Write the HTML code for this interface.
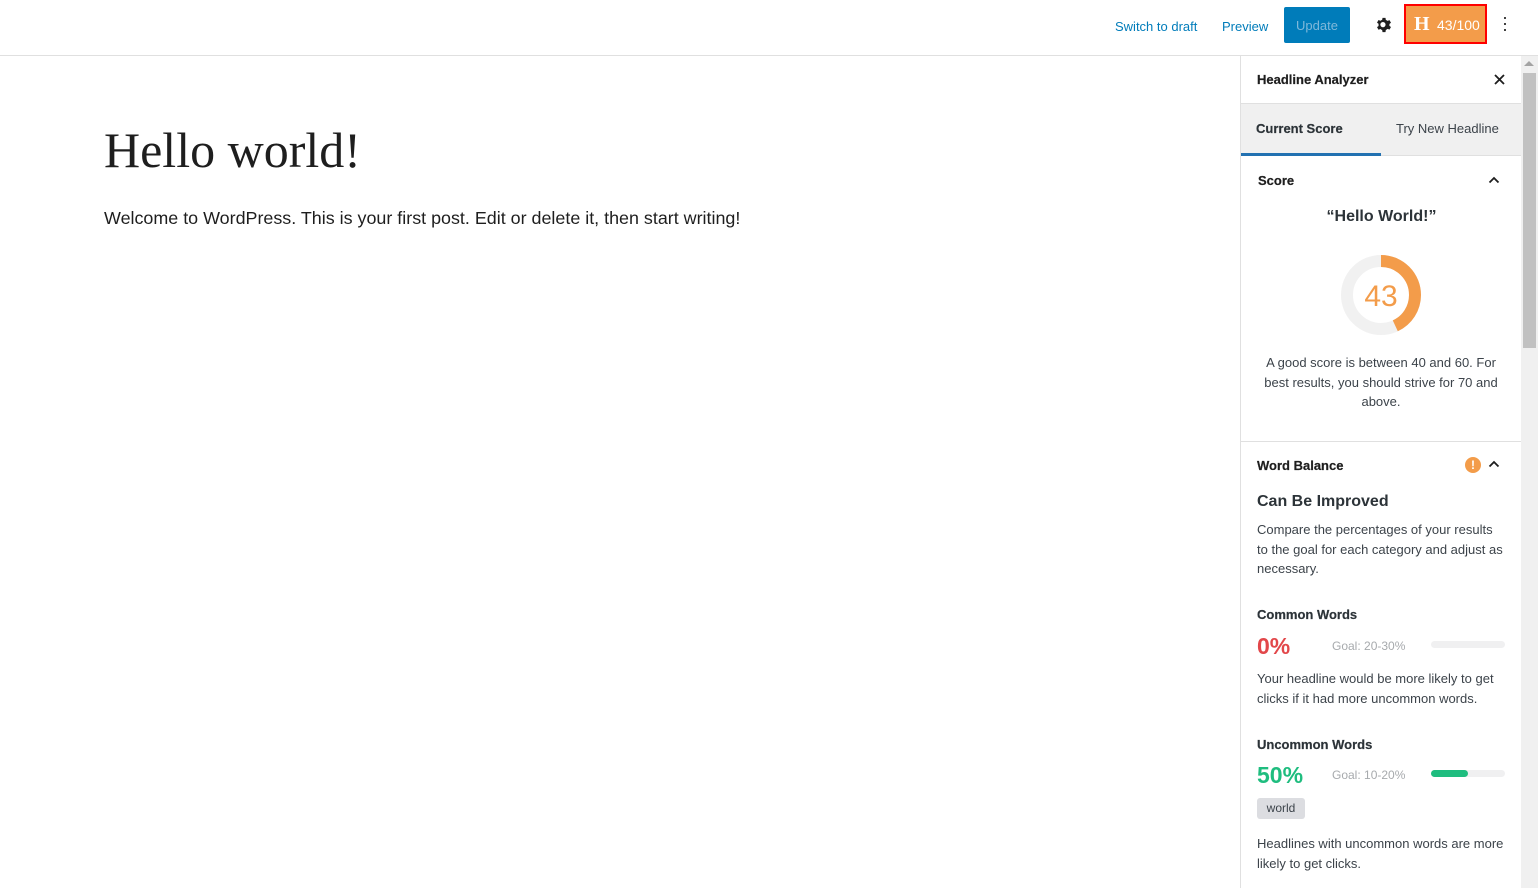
<!DOCTYPE html>
<html><head><meta charset="utf-8"><style>
*{box-sizing:border-box;margin:0;padding:0}
body{width:1538px;height:888px;overflow:hidden;background:#fff;font-family:"Liberation Sans",sans-serif;color:#1e1e1e;position:relative}
.top{position:absolute;left:0;top:0;width:1538px;height:56px;border-bottom:1px solid #e0e0e0}
.a{position:absolute;font-size:13px;color:#007cba;top:19px}
.upd{position:absolute;left:1284px;top:7px;width:66px;height:36px;background:#007cba;color:#7fb8da;font-size:13px;line-height:38px;text-align:center;border-radius:2px}
.hb{position:absolute;left:1404px;top:4px;width:83px;height:40px;border:2px solid #f00;background:#f39c4a;color:#fff}
.sb{position:absolute;left:1240px;top:56px;width:282px;height:832px;border-left:1px solid #e0e0e0}
.t{position:absolute;font-size:13px;font-weight:600;-webkit-text-stroke:0.2px currentColor}
.scroll{position:absolute;left:1521px;top:56px;width:17px;height:832px;background:#f0f0f0}
.chev{position:absolute}
</style></head><body>
<div class="top">
<span class="a" style="left:1115px">Switch to draft</span>
<span class="a" style="left:1222px">Preview</span>
<div class="upd">Update</div>
<svg style="position:absolute;left:1375px;top:16px" width="18" height="18" viewBox="0 0 24 24"><path fill="#1e1e1e" d="M12 8.5a3.5 3.5 0 100 7 3.5 3.5 0 000-7zm8.6 5.1l2.1 1.6-2 3.5-2.5-1a8 8 0 01-2.4 1.4L15.4 22h-4l-.4-2.7a8 8 0 01-2.4-1.4l-2.5 1-2-3.5 2.1-1.6a8 8 0 010-2.8L4.1 9.4l2-3.5 2.5 1A8 8 0 0111 5.5L11.4 3h4l.4 2.6a8 8 0 012.4 1.4l2.5-1 2 3.5-2.1 1.6a8 8 0 010 2.8z" transform="translate(-1.4 -.5)"/></svg>
<div class="hb"><span style="position:absolute;left:8px;top:7px;font-family:'Liberation Serif',serif;font-weight:bold;font-size:20px">H</span><span style="position:absolute;left:31px;top:11px;font-size:14px">43/100</span></div>
<span style="position:absolute;left:1502px;top:14px;font-size:18px;line-height:6px;width:4px">·<br>·<br>·</span>
</div>
<div style="position:absolute;left:104px;top:121px;font-family:'Liberation Serif',serif;font-size:50px;font-weight:300;color:#1e1e1e">Hello world!</div>
<div style="position:absolute;left:104px;top:208px;font-size:17.9px">Welcome to WordPress. This is your first post. Edit or delete it, then start writing!</div>
<div class="sb">
<div class="t" style="left:16px;top:16px;color:#1e1e1e">Headline Analyzer</div>
<svg style="position:absolute;left:253px;top:18px" width="11" height="11" viewBox="0 0 11 11"><path d="M1 1L10 10M10 1L1 10" stroke="#1e1e1e" stroke-width="1.8"/></svg>
<div style="position:absolute;left:0;top:47px;width:281px;height:53px;background:#f0f0f0;border-top:1px solid #e0e0e0;border-bottom:1px solid #e0e0e0"></div>
<div class="t" style="left:15px;top:65px;color:#2c3338">Current Score</div>
<div style="position:absolute;font-size:13px;left:155px;top:65px;color:#3c434a">Try New Headline</div>
<div style="position:absolute;left:0;top:97px;width:140px;height:3px;background:#2271b1"></div>
<div class="t" style="left:17px;top:117px">Score</div>
<svg class="chev" style="left:247px;top:120px" width="12" height="8" viewBox="0 0 12 8"><path d="M1.5 6.5L6 2L10.5 6.5" fill="none" stroke="#1e1e1e" stroke-width="1.8"/></svg>
<div style="position:absolute;left:0;top:152px;width:281px;text-align:center;font-size:16px;font-weight:bold;color:#2c3338">“Hello World!”</div>
<svg style="position:absolute;left:99px;top:198px" width="82" height="82" viewBox="0 0 82 82"><circle cx="41" cy="41" r="34" fill="none" stroke="#f1f1f1" stroke-width="12"/><circle cx="41" cy="41" r="34" fill="none" stroke="#f39c4a" stroke-width="12" stroke-dasharray="91.9 300" transform="rotate(-90 41 41)"/><text x="41" y="52" text-anchor="middle" font-size="30" fill="#f39c4a" font-family="Liberation Sans">43</text></svg>
<div style="position:absolute;left:20px;top:297px;width:240px;text-align:center;font-size:13px;line-height:19.5px;color:#3c434a">A good score is between 40 and 60. For best results, you should strive for 70 and above.</div>
<div style="position:absolute;left:0;top:385px;width:281px;border-top:1px solid #e0e0e0"></div>
<div class="t" style="left:16px;top:402px">Word Balance</div>
<div style="position:absolute;left:224px;top:401px;width:16px;height:16px;border-radius:50%;background:#f39c4a;color:#fff;font-size:12px;font-weight:bold;text-align:center;line-height:16px">!</div>
<svg class="chev" style="left:247px;top:404px" width="12" height="8" viewBox="0 0 12 8"><path d="M1.5 6.5L6 2L10.5 6.5" fill="none" stroke="#1e1e1e" stroke-width="1.8"/></svg>
<div style="position:absolute;left:16px;top:437px;font-size:16px;font-weight:bold;color:#2c3338">Can Be Improved</div>
<div style="position:absolute;left:16px;top:464px;width:248px;font-size:13px;line-height:19.5px;color:#3c434a">Compare the percentages of your results to the goal for each category and adjust as necessary.</div>
<div class="t" style="left:16px;top:551px;color:#2c3338">Common Words</div>
<div style="position:absolute;left:16px;top:577px;font-size:23px;font-weight:bold;color:#e2474a">0%</div>
<div style="position:absolute;left:91px;top:583px;font-size:12px;color:#a7aaad">Goal: 20-30%</div>
<div style="position:absolute;left:190px;top:585px;width:74px;height:7px;border-radius:4px;background:#f0f0f1"></div>
<div style="position:absolute;left:16px;top:613px;width:255px;font-size:13px;line-height:19.5px;color:#3c434a">Your headline would be more likely to get clicks if it had more uncommon words.</div>
<div class="t" style="left:16px;top:681px;color:#2c3338">Uncommon Words</div>
<div style="position:absolute;left:16px;top:706px;font-size:23px;font-weight:bold;color:#1fbd7f">50%</div>
<div style="position:absolute;left:91px;top:712px;font-size:12px;color:#a7aaad">Goal: 10-20%</div>
<div style="position:absolute;left:190px;top:714px;width:74px;height:7px;border-radius:4px;background:#f0f0f1"><div style="width:37px;height:7px;border-radius:4px;background:#1fbd7f"></div></div>
<div style="position:absolute;left:16px;top:742px;width:48px;height:21px;border-radius:3px;background:#dcdde1;font-size:12px;line-height:21px;text-align:center;color:#3c434a">world</div>
<div style="position:absolute;left:16px;top:778px;width:255px;font-size:13px;line-height:19.5px;color:#3c434a">Headlines with uncommon words are more likely to get clicks.</div>
</div>
<div class="scroll"><div style="position:absolute;left:3px;top:5px;width:0;height:0;border-left:5px solid transparent;border-right:5px solid transparent;border-bottom:5px solid #a3a3a3"></div><div style="position:absolute;left:2px;top:17px;width:13px;height:275px;background:#c1c1c1"></div></div>
</body></html>
